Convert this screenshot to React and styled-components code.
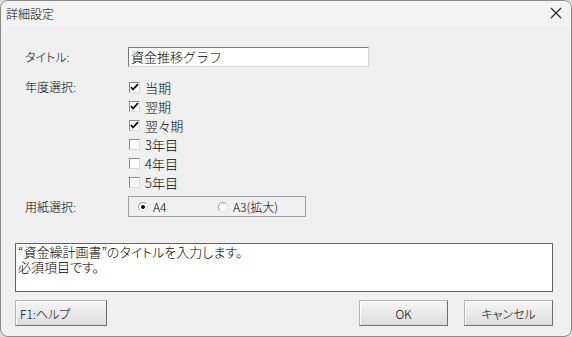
import React from 'react';
import styled, { createGlobalStyle } from 'styled-components';

const GlobalStyle = createGlobalStyle`
  html, body {
    margin: 0;
    padding: 0;
    background: #dcdcdc;
  }
  body {
    font-family: "Noto Sans CJK JP", "Liberation Sans", sans-serif;
    font-size: 12px;
    font-weight: 300;
    color: #000;
  }
`;

const Window = styled.div`
  width: 572px;
  height: 337px;
  box-sizing: border-box;
  border: 1px solid #8a8a8a;
  border-radius: 8px;
  background: #f0f0f0;
  overflow: hidden;
  display: flex;
  flex-direction: column;
  font-feature-settings: "palt";
`;

const TitleBar = styled.div`
  height: 25px;
  flex: none;
  background: #f3f3f3;
  display: flex;
  align-items: center;
  justify-content: space-between;
  padding: 0 9px 0 5px;
  line-height: 1;
`;

const CloseButton = styled.svg`
  width: 12px;
  height: 12px;
  margin-top: -1px;
`;

const Body = styled.div`
  flex: 1;
  padding: 21px 18px 0 14px;
  display: flex;
  flex-direction: column;
`;

const FieldRow = styled.div`
  display: flex;
  align-items: flex-start;
  padding-left: 10px;
  margin-top: ${(p) => p.$top || 0}px;
`;

const Label = styled.div`
  width: 103px;
  flex: none;
  line-height: 20px;
  margin-top: ${(p) => p.$shift || 0}px;
`;

const TextBox = styled.div`
  width: 241px;
  height: 20px;
  box-sizing: border-box;
  background: #fff;
  border: 1px solid;
  border-color: #7a7a7a #d6d6d6 #d6d6d6 #7a7a7a;
  padding: 0 2px;
  font-size: 13px;
  line-height: 17px;
  font-feature-settings: normal;
`;

const CheckList = styled.div`
  display: flex;
  flex-direction: column;
`;

const CheckRow = styled.div`
  height: 19px;
  display: flex;
  align-items: center;
  gap: 5px;
`;

const Box = styled.span`
  width: 11px;
  height: 11px;
  box-sizing: border-box;
  border: 1px solid;
  border-color: #8a8a8a #dadada #dadada #8a8a8a;
  background: #fff;
  display: inline-flex;
  align-items: center;
  justify-content: center;
  margin-left: 1px;
`;

const CheckText = styled.span`
  font-size: 13px;
  line-height: 1;
`;

const GroupBox = styled.div`
  width: 178px;
  height: 21px;
  box-sizing: border-box;
  border: 1px solid #a0a0a0;
  display: flex;
  align-items: center;
  padding-left: 9px;
`;

const RadioItem = styled.label`
  display: flex;
  align-items: center;
  gap: 5px;
  width: ${(p) => p.$w}px;
  font-size: 12px;
`;

const RadioDot = styled.span`
  width: 10px;
  height: 10px;
  box-sizing: border-box;
  border-radius: 50%;
  border: 1px solid;
  border-color: #9a9a9a #e0e0e0 #e0e0e0 #9a9a9a;
  background: #fff;
  display: inline-flex;
  align-items: center;
  justify-content: center;
  &::after {
    content: '';
    width: 4px;
    height: 4px;
    border-radius: 50%;
    background: ${(p) => (p.$on ? '#000' : 'transparent')};
  }
`;

const Message = styled.div`
  margin-top: 26px;
  height: 49px;
  box-sizing: border-box;
  background: #fff;
  border: 1px solid #646464;
  padding: 0 2px;
  font-size: 13px;
  line-height: 15px;
`;

const ButtonRow = styled.div`
  display: flex;
  margin-top: 8px;
  gap: 16px;
`;

const Button = styled.button`
  width: ${(p) => p.$w}px;
  height: 26px;
  box-sizing: border-box;
  border: 1px solid;
  border-color: #b4b4b4 #6e6e6e #6e6e6e #b4b4b4;
  background: linear-gradient(#f6f6f6, #dddddd);
  box-shadow: inset 1px 1px 0 #ffffff;
  font-family: inherit;
  font-size: 12px;
  font-weight: 300;
  font-feature-settings: "palt";
  padding: 0 4px;
  text-align: ${(p) => p.$align || 'center'};
  color: #000;
  margin-left: ${(p) => (p.$push ? 'auto' : '0')};
`;

const years = [
  { label: '当期', on: true },
  { label: '翌期', on: true },
  { label: '翌々期', on: true },
  { label: '3年目', on: false },
  { label: '4年目', on: false },
  { label: '5年目', on: false },
];

function Check({ on }) {
  return (
    <Box>
      {on && (
        <svg width="9" height="9" viewBox="0 0 9 9">
          <path d="M1 4 L3 6.5 L8 1.2" fill="none" stroke="#000" strokeWidth="1.8" />
        </svg>
      )}
    </Box>
  );
}

export default function App() {
  return (
    <>
      <GlobalStyle />
      <Window>
        <TitleBar>
          <span>詳細設定</span>
          <CloseButton viewBox="0 0 12 12">
            <path d="M1 1 L11 11 M11 1 L1 11" stroke="#222" strokeWidth="1.1" />
          </CloseButton>
        </TitleBar>
        <Body>
          <FieldRow>
            <Label>タイトル:</Label>
            <TextBox>資金推移グラフ</TextBox>
          </FieldRow>
          <FieldRow $top={11}>
            <Label $shift={-1}>年度選択:</Label>
            <CheckList>
              {years.map((y) => (
                <CheckRow key={y.label}>
                  <Check on={y.on} />
                  <CheckText>{y.label}</CheckText>
                </CheckRow>
              ))}
            </CheckList>
          </FieldRow>
          <FieldRow $top={4}>
            <Label $shift={1}>用紙選択:</Label>
            <GroupBox>
              <RadioItem $w={80}>
                <RadioDot $on />
                A4
              </RadioItem>
              <RadioItem $w={80}>
                <RadioDot />
                A3(拡大)
              </RadioItem>
            </GroupBox>
          </FieldRow>
          <Message>
            “資金繰計画書”のタイトルを入力します。
            <br />
            必須項目です。
          </Message>
          <ButtonRow>
            <Button $w={92} $align="left">F1:ヘルプ</Button>
            <Button $w={89} $push>OK</Button>
            <Button $w={89}>キャンセル</Button>
          </ButtonRow>
        </Body>
      </Window>
    </>
  );
}
